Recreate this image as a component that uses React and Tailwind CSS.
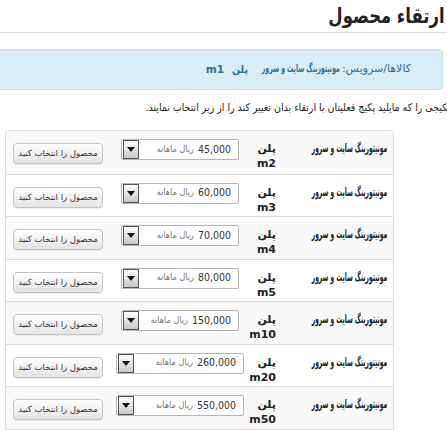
import React from 'react';

const plans = [
  { code: 'm2', price: '45,000', wide: false },
  { code: 'm3', price: '60,000', wide: false },
  { code: 'm4', price: '70,000', wide: false },
  { code: 'm5', price: '80,000', wide: false },
  { code: 'm10', price: '150,000', wide: false },
  { code: 'm20', price: '260,000', wide: true },
  { code: 'm50', price: '550,000', wide: true },
];

function FakeSelect({ price, wide }) {
  return (
    <div
      className={`${wide ? 'w-[128px]' : 'w-[118px]'} h-[21px] flex items-center bg-white border border-[#b5b5b5] rounded-[2px]`}
    >
      <div className="flex-1 flex items-center pr-[7px] gap-[4px] whitespace-nowrap">
        <span className="text-[10.5px] text-[#333]">{price}</span>
        <span className="text-[9px] text-[#777]">ریال ماهانه</span>
      </div>
      <div className="w-[16px] h-[19px] mx-[1px] flex items-center justify-center border border-[#555] bg-gradient-to-b from-white to-[#c8c8c8]">
        <svg width="8" height="5" viewBox="0 0 8 5">
          <path d="M0 0 L8 0 L4 5 Z" fill="#111" />
        </svg>
      </div>
    </div>
  );
}

function PlanRow({ plan, index }) {
  return (
    <div
      className={`flex h-[42.5px] ${index > 0 ? 'border-t border-[#ddd]' : ''} ${index % 2 === 0 ? 'bg-[#f9f9f9]' : 'bg-white'}`}
    >
      <div className="w-[111px] pr-[6px] pt-[10px] text-[12px] font-bold leading-[15px] whitespace-nowrap text-[#222]">
        <span className="inline-block origin-right scale-x-[0.55]">مونیتورینگ سایت و سرور</span>
      </div>
      <div className="w-[32px] pr-[6px] pt-[10px] text-[11px] font-bold leading-[15px] text-[#222] font-['DejaVu_Sans',_sans-serif]">
        <div>پلن</div>
        <div>{plan.code}</div>
      </div>
      <div className="w-[140px] flex justify-center pt-[8px]">
        <FakeSelect price={plan.price} wide={plan.wide} />
      </div>
      <div className="flex-1 flex justify-center pt-[12px]">
        <button className="w-[90px] h-[21px] rounded-[4px] border border-[#c4c4c4] bg-gradient-to-b from-white to-[#e4e4e4] shadow-[0_1px_1px_rgba(0,0,0,0.08)] text-[8.5px] text-[#333] whitespace-nowrap font-['DejaVu_Sans',_sans-serif]">
          محصول را انتخاب کنید
        </button>
      </div>
    </div>
  );
}

export default function App() {
  return (
    <div
      dir="rtl"
      className="w-[447px] h-[432px] overflow-hidden bg-white text-[#333] font-['DejaVu_Sans_Condensed',_'DejaVu_Sans',_sans-serif]"
    >
      <div className="pt-[4px] pr-[2px] pb-[3px] border-b border-[#ddd]">
        <h1 className="text-[21px] font-bold leading-[25px] text-[#222] whitespace-nowrap">
          <span className="inline-block origin-right scale-x-[0.87]">ارتقاء محصول</span>
        </h1>
      </div>

      <div className="mt-[16px] mr-[4px] ml-[-10px] h-[41px] flex items-center pr-[31px] border border-[#bce8f1] bg-[#d9edf7] rounded-[4px] text-[#31708f] whitespace-nowrap">
        <span className="w-[71px] shrink-0 text-[11px] font-['DejaVu_Sans',_sans-serif]">کالاها/سرویس:</span>
        <span className="w-[92px] shrink-0 text-[11px] font-bold">
          <span className="inline-block origin-right scale-x-[0.62]">مونیتورینگ سایت و سرور</span>
        </span>
        <span className="text-[10.5px] font-bold">پلن</span>
        <span className="mr-[8px] text-[10.5px] font-bold font-['DejaVu_Sans',_sans-serif]">m1</span>
      </div>

      <p className="mt-[10px] mr-[-3px] text-[10.5px] leading-[14px] whitespace-nowrap text-[#222]">
        پکیجی را که مایلید پکیج فعلیتان با ارتقاء بدان تغییر کند را از زیر انتخاب نمایند.
      </p>

      <div className="mt-[16px] mr-[53px] ml-[5px] border border-[#ddd] rounded-t-[4px] overflow-hidden">
        {plans.map((plan, i) => (
          <PlanRow key={plan.code} plan={plan} index={i} />
        ))}
      </div>
    </div>
  );
}
